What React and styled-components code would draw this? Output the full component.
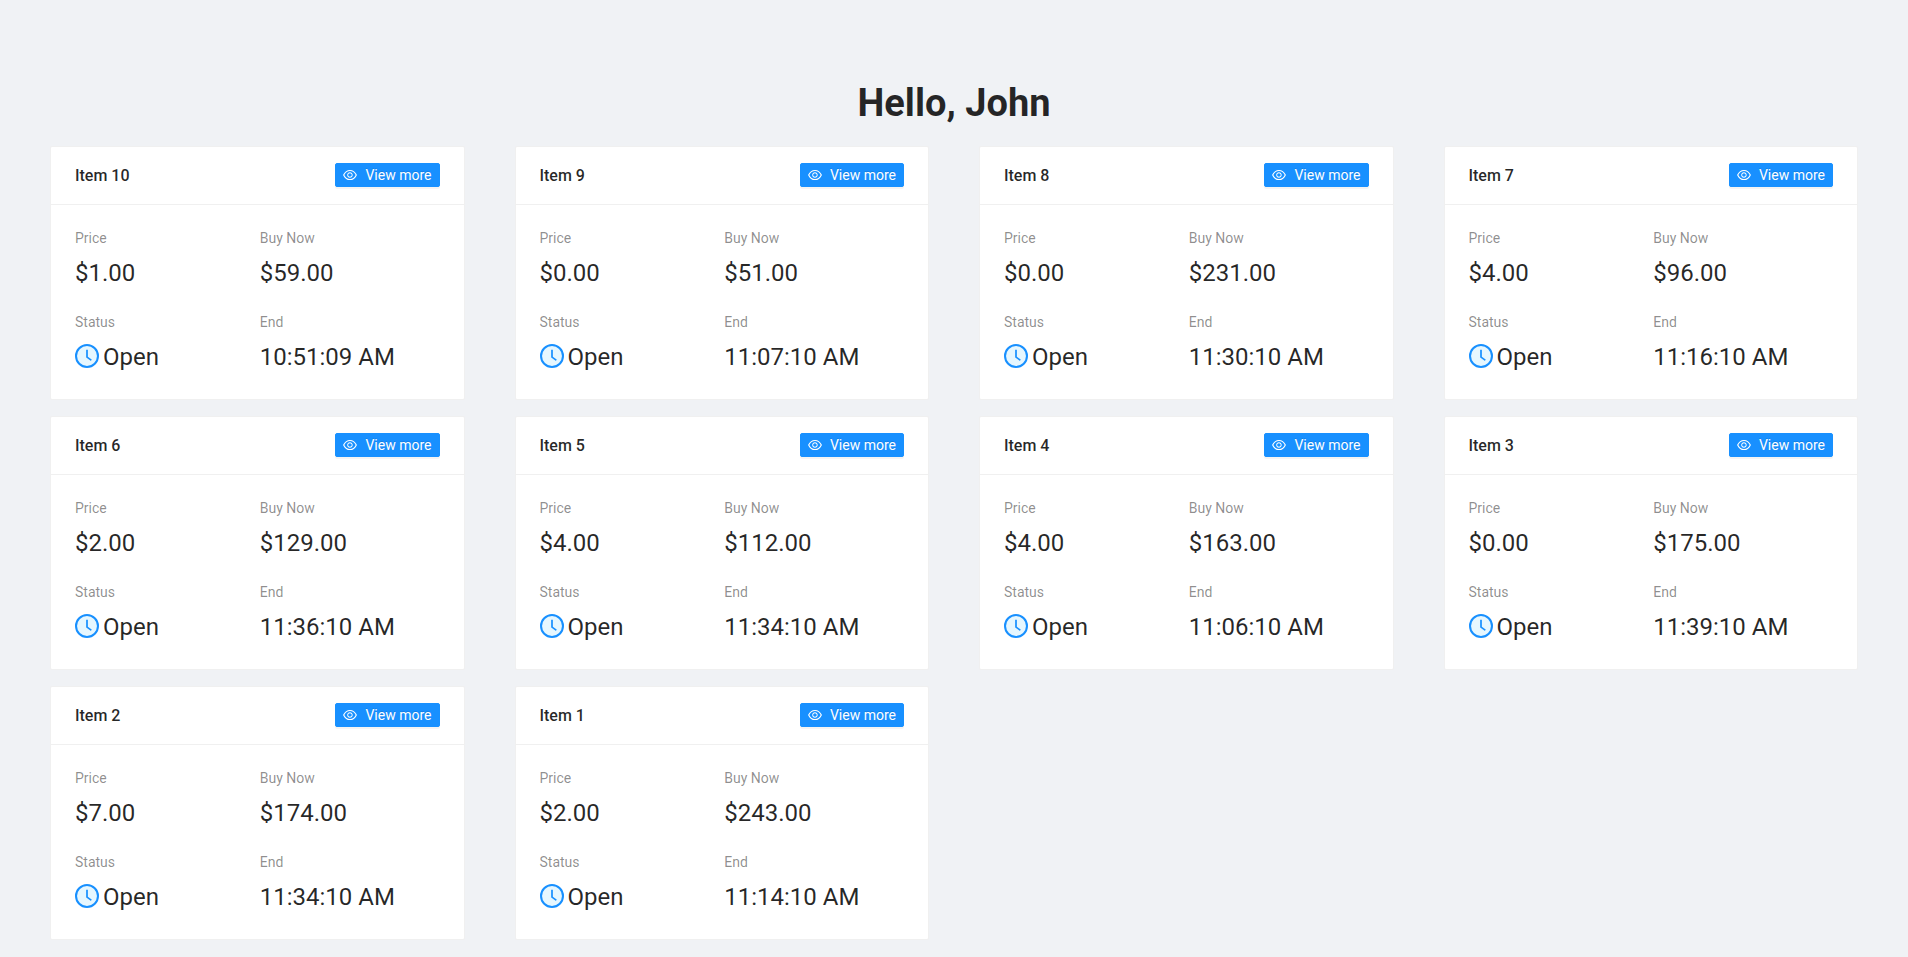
import React from "react";
import styled, { createGlobalStyle } from "styled-components";

const GlobalStyle = createGlobalStyle`
  *, *::before, *::after { box-sizing: border-box; }
  body {
    margin: 0;
    min-height: 100vh;
    background: #f0f2f5;
    color: rgba(0, 0, 0, 0.85);
    font-family: Roboto, "Liberation Sans", sans-serif;
    font-size: 14px;
    line-height: 22px;
  }
`;

const Page = styled.main`
  padding: 80px 50px 16px;
`;

const Greeting = styled.h1`
  margin: 0 0 20px;
  font-size: 38px;
  line-height: 46px;
  font-weight: 700;
  text-align: center;
`;

const ItemGrid = styled.section`
  display: grid;
  grid-template-columns: repeat(4, minmax(0, 1fr));
  gap: 16px 50px;
  @media (max-width: 1400px) { grid-template-columns: repeat(2, minmax(0, 1fr)); }
  @media (max-width: 720px) { grid-template-columns: minmax(0, 1fr); }
`;

const Card = styled.article`
  background: #fff;
  border: 1px solid #f0f0f0;
  border-radius: 2px;
`;

const CardHeader = styled.header`
  display: flex;
  align-items: flex-start;
  justify-content: space-between;
  padding: 16px 24px;
  border-bottom: 1px solid #f0f0f0;
`;

const CardTitle = styled.h2`
  margin: 0;
  font-size: 16px;
  line-height: 25px;
  font-weight: 500;
`;

const ViewButton = styled.button`
  display: flex;
  align-items: center;
  gap: 8px;
  height: 24px;
  padding: 0 7px;
  border: 1px solid #1890ff;
  border-radius: 2px;
  background: #1890ff;
  color: #fff;
  font: inherit;
  text-shadow: 0 -1px 0 rgba(0, 0, 0, 0.12);
  box-shadow: 0 2px 0 rgba(0, 0, 0, 0.045);
  cursor: pointer;
`;

const Stats = styled.dl`
  display: grid;
  grid-template-columns: repeat(2, minmax(0, 1fr));
  gap: 19px 5px;
  margin: 0;
  padding: 22px 24px 23px;
`;

const Stat = styled.div`
  min-width: 0;
`;

const StatLabel = styled.dt`
  margin-bottom: 5px;
  color: rgba(0, 0, 0, 0.45);
`;

const StatValue = styled.dd`
  margin: 0;
  font-size: 24px;
  line-height: 38px;
  white-space: nowrap;

  svg {
    margin-right: 4px;
    vertical-align: -3px;
  }
`;

const EyeIcon = () => (
  <svg width="14" height="14" viewBox="64 64 896 896" fill="currentColor" aria-hidden="true">
    <path d="M942.2 486.2C847.4 286.5 704.1 186 512 186c-192.2 0-335.4 100.5-430.2 300.3a60.3 60.3 0 000 51.5C176.6 737.5 319.9 838 512 838c192.2 0 335.4-100.5 430.2-300.3 7.7-16.2 7.7-35 0-51.5zM512 766c-161.3 0-279.4-81.8-362.7-254C232.6 339.8 350.7 258 512 258c161.3 0 279.4 81.8 362.7 254C791.5 684.2 673.4 766 512 766zm-4-430c-97.2 0-176 78.8-176 176s78.8 176 176 176 176-78.8 176-176-78.8-176-176-176zm0 288c-61.9 0-112-50.1-112-112s50.1-112 112-112 112 50.1 112 112-50.1 112-112 112z" />
  </svg>
);

const ClockIcon = () => (
  <svg width="24" height="24" viewBox="64 64 896 896" aria-hidden="true">
    <circle cx="512" cy="512" r="410" fill="#e6f7ff" stroke="#1890ff" strokeWidth="76" />
    <path fill="#1890ff" d="M686.7 638.6L544.1 535.5V288c0-4.4-3.6-8-8-8H488c-4.4 0-8 3.6-8 8v275.4c0 2.6 1.2 5 3.3 6.5l165.4 120.6c3.6 2.6 8.6 1.8 11.2-1.7l28.6-39c2.6-3.7 1.8-8.7-1.8-11.2z" />
  </svg>
);

const items = [
  { id: 10, price: "$1.00", buyNow: "$59.00", end: "10:51:09 AM" },
  { id: 9, price: "$0.00", buyNow: "$51.00", end: "11:07:10 AM" },
  { id: 8, price: "$0.00", buyNow: "$231.00", end: "11:30:10 AM" },
  { id: 7, price: "$4.00", buyNow: "$96.00", end: "11:16:10 AM" },
  { id: 6, price: "$2.00", buyNow: "$129.00", end: "11:36:10 AM" },
  { id: 5, price: "$4.00", buyNow: "$112.00", end: "11:34:10 AM" },
  { id: 4, price: "$4.00", buyNow: "$163.00", end: "11:06:10 AM" },
  { id: 3, price: "$0.00", buyNow: "$175.00", end: "11:39:10 AM" },
  { id: 2, price: "$7.00", buyNow: "$174.00", end: "11:34:10 AM" },
  { id: 1, price: "$2.00", buyNow: "$243.00", end: "11:14:10 AM" },
];

const Statistic = ({ label, icon, children }) => (
  <Stat>
    <StatLabel>{label}</StatLabel>
    <StatValue>
      {icon}
      {children}
    </StatValue>
  </Stat>
);

const ItemCard = ({ item }) => (
  <Card>
    <CardHeader>
      <CardTitle>Item {item.id}</CardTitle>
      <ViewButton type="button">
        <EyeIcon />
        <span>View more</span>
      </ViewButton>
    </CardHeader>
    <Stats>
      <Statistic label="Price">{item.price}</Statistic>
      <Statistic label="Buy Now">{item.buyNow}</Statistic>
      <Statistic label="Status" icon={<ClockIcon />}>Open</Statistic>
      <Statistic label="End">{item.end}</Statistic>
    </Stats>
  </Card>
);

export default function App() {
  return (
    <>
      <GlobalStyle />
      <Page>
        <Greeting>Hello, John</Greeting>
        <ItemGrid>
          {items.map((item) => (
            <ItemCard key={item.id} item={item} />
          ))}
        </ItemGrid>
      </Page>
    </>
  );
}
